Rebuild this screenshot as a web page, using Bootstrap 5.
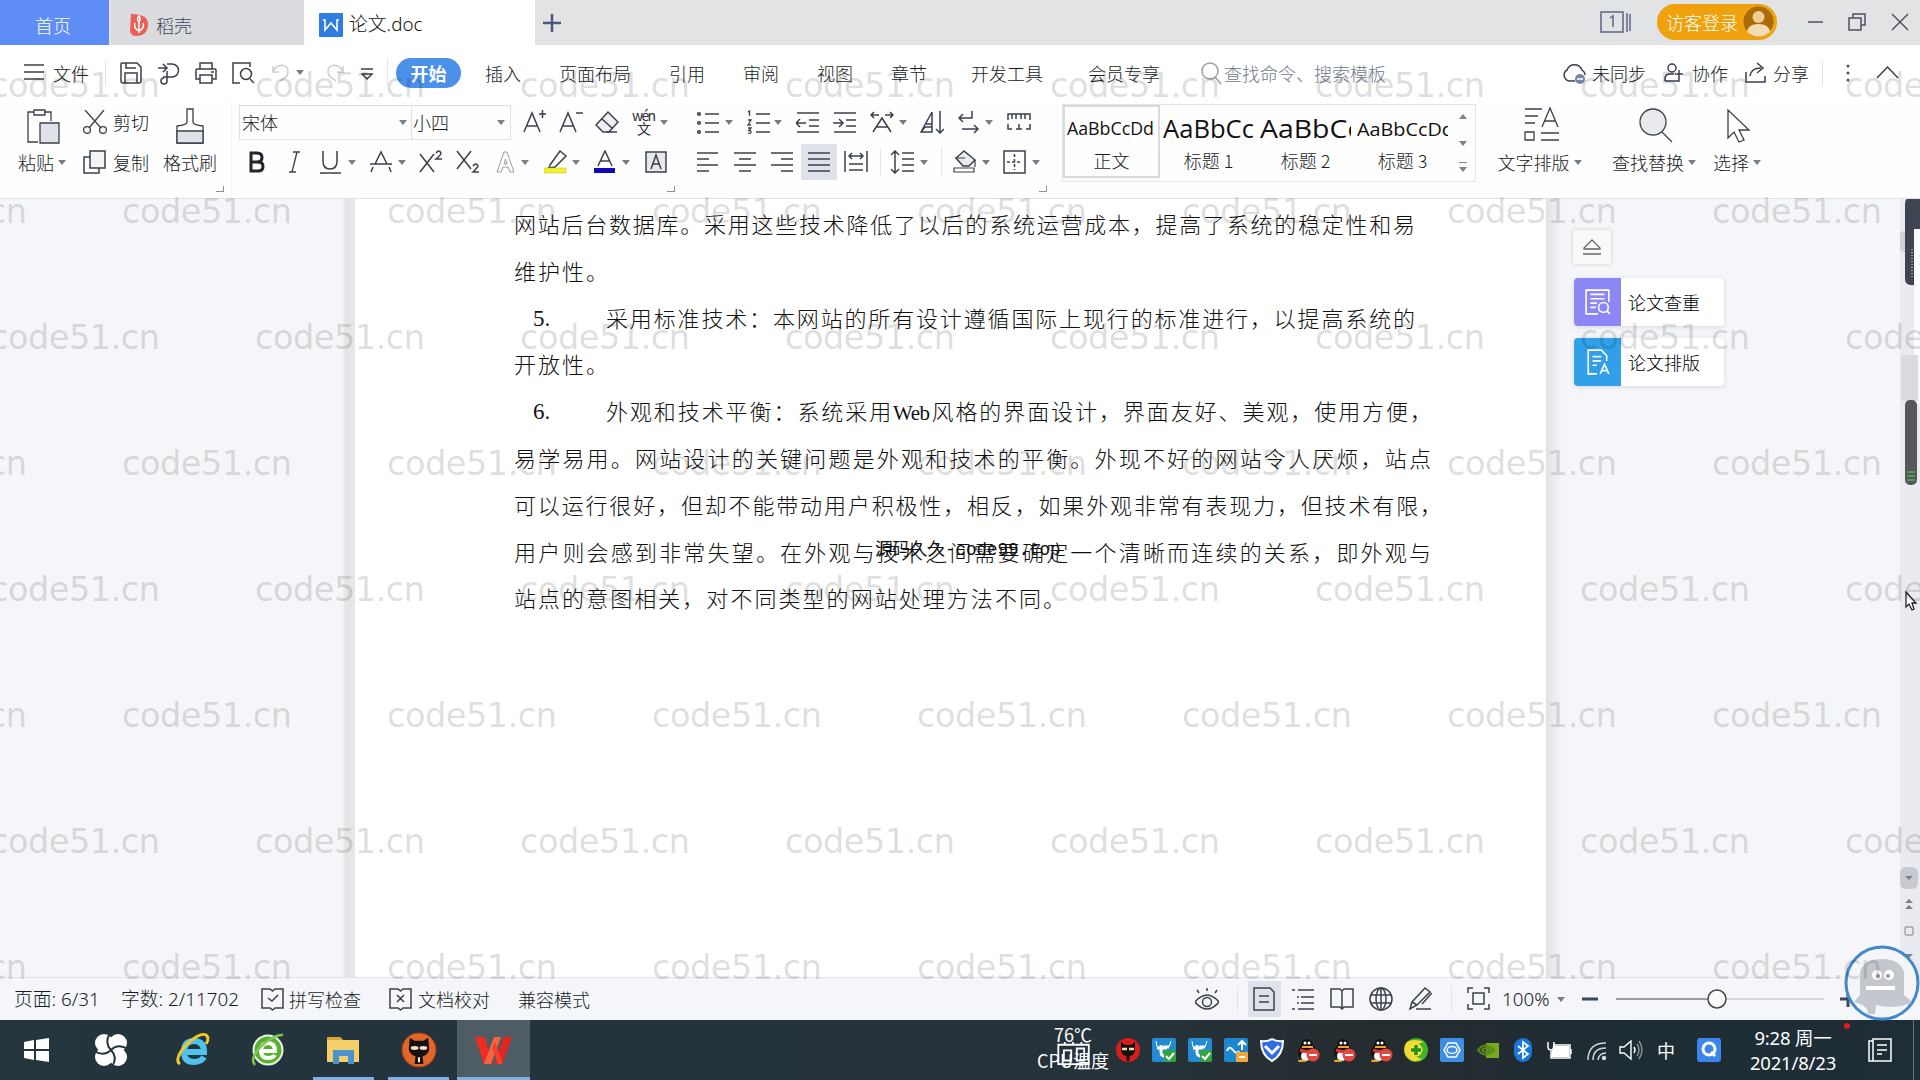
<!DOCTYPE html>
<html lang="zh-CN">
<head>
<meta charset="utf-8">
<title>论文.doc</title>
<link href="https://cdn.jsdelivr.net/npm/bootstrap@5.3.0/dist/css/bootstrap.min.css" rel="stylesheet">
<script src="https://cdn.jsdelivr.net/npm/bootstrap@5.3.0/dist/js/bootstrap.bundle.min.js"></script>
<style>
body{width:1920px;height:1080px;overflow:hidden;position:relative;font:300 18px/1 "Noto Sans CJK SC",sans-serif;color:#171b24;background:#fff}
.strip{display:grid;align-items:center;white-space:nowrap;justify-items:start}
svg{display:block;overflow:visible;flex:none}
.ic{width:24px;height:24px;fill:none;stroke:#3b404b;stroke-width:1.5}
.ic.big{width:36px;height:36px;stroke-width:1.3}
.caret{width:0;height:0;border:4px solid transparent;border-top:5px solid #777c85;border-bottom:0}
.vline{width:1px;height:26px;background:#e3e4e8}
.tabs{height:45px;background:#e1e3e5}
.tab-home{width:109px;background:#5e8df6;color:#fff;padding-right:3px}
.tab-docer{width:193px;margin-left:2px;background:#dadbde;color:#3d4557;padding-left:19px;gap:8px}
.tab-doc{width:231px;background:#fff;padding-left:15px;gap:6px;color:#111}
.winbar{grid-template-columns:45px 12px 132px 19px 40px 44px 28px;margin-left:auto;padding-bottom:2px}
.login{width:120px;height:36px;border-radius:18px;background:#efa20d;color:#fff;padding:0 3px 0 9px}
.menu{height:57px;padding-left:24px;padding-bottom:2px;grid-template-columns:29px 52px 15px 38px 37px 37px 40px 24px 24px 41px 26px 9px 89px 74px 110px 74px 74px 74px 80px 117px 113px 23px 338px 30px 72px 28px 53px 28px 49px 23px 32px 43px}
.start{width:65px;height:30px;border-radius:15px;background:#4b90e9;color:#fff;font-weight:700}
.ribbon{height:97px;background:#fefefe;border-bottom:1px solid #e2e3e6;position:relative}
.cellA{height:40px}
.cellA>span,.cellA.lab{position:relative}
.g1{width:232px;padding-left:7px;border-right:1px solid #f4f4f6}
.g2{width:458px;padding-left:7px}
.g3{width:372px;padding-left:7px}
.g2a{grid-template-columns:284px 36px 36px 37px 28px 20px}
.g2b{padding-left:8px;grid-template-columns:42px 31px 28px 22px 28px 21px 37px 40px 25px 23px 28px 22px 28px 23px 30px}
.g3a{grid-template-columns:28px 22px 27px 22px 37px 37px 29px 21px 38px 27px 22px 30px}
.g3b{grid-template-columns:37px 37px 30px 43px 36px 11px 29px 21px 12px 29px 21px 29px 10px}
.fontbox{width:272px;height:35px;border:1px solid #e0e1e4}
.fontname{width:172px;height:33px;border-right:1px solid #e0e1e4;padding:0 4px 0 2px}
.fontsz{flex:1;padding:0 5px 0 1px}
.on{width:36px;height:36px;background:#dfe2e9}
.styles{width:414px;height:78px;margin-top:2px;border:1px solid #e3e4e7}
.sty{width:97px;height:74px;padding-top:5px}
.sty.sel{border:2px solid #d9dadd;height:73px;padding-top:3px}
.sty svg{width:91px;height:41px;overflow:hidden}
.sty text{font-family:"Open Sans",sans-serif;font-weight:400;fill:#111}
.corner{position:absolute;top:84px;width:8px;height:6px;border:solid #8b8f97;border-width:0 1px 1px 0}
.work{height:778px;background:#f5f6f9}
.gut{width:355px;background:linear-gradient(90deg,#f5f6f9 342px,#e3e4e6 346px,#e6e7e9 354px)}
.paper{width:1191px;background:#fff;padding:1px 0 0 159px;font-size:22px;line-height:46.8px;color:#111}
.ln{display:flex;white-space:nowrap;height:46.8px}
.ln>div{text-align:justify;text-align-last:justify}
.w1{width:901px}.w2{width:94px}.w3{width:809px}.w5{width:826px}.w6{width:917px}.w7{width:928px}.w9{width:551px}
.no{width:92px;padding-left:19px;font:400 23px/50px "Liberation Serif",serif}
.webword{font-family:"Liberation Serif",serif;font-weight:400;font-size:21px;letter-spacing:-.5px}
.side{flex:1;padding:31px 0 0 27px;background:linear-gradient(90deg,#dfe0e2 0,#e9eaec 6px,#f5f6f9 16px)}
.fold{width:38px;height:34px;background:#f9f9fb;border-radius:3px;box-shadow:0 0 4px #ccc}
.tool{width:150px;height:48px;background:#fff;border-radius:4px;box-shadow:0 1px 5px #d5d6da;overflow:hidden;margin-left:1px;color:#000}
.tool>span:first-child{width:47px;height:48px;background:#8c86f6;margin-right:7px}
.tool.blue>span:first-child{background:#31a0e8}
.tool .ic{stroke:#fff;width:26px;height:26px}
.scroll{width:20px;background:#e9ebf1}
.scroll svg{width:20px;height:778px}
.status{height:43px;background:#f4f6fa;border-top:1px solid #e2e4e8;padding-left:14px;grid-template-columns:107px 140px 28px 100px 29px 100px 677px 42px 11px 44px 38px 39px 39px 43px 16px 35px 55px 25px 34px 224px 20px}
.status .act{width:33px;height:36px;background:#dfe2ea}
.slider{width:208px;height:20px}
.task{height:60px;background:linear-gradient(90deg,#24353e,#263239 60%,#252c2f 72%,#1e2c34 85%,#1f2d36)}
.apps{grid-template-columns:70px 81px 76px 75px 75px 69px 73px;padding-left:24px}
.apps>*{height:60px;display:flex;align-items:center}
.runbar{box-shadow:inset 0 -3px #83b0e4}
.tray{margin-left:auto;width:883px;height:60px;grid-template-columns:79px 36px 36px 36px 36px 37px 36px 37px 34px 36px 37px 35px 35px 40px 32px 38px 40px 49px 122px 45px 1px}
.tray svg{width:24px;height:24px}
.cpu{position:relative;width:72px;color:#fff;text-align:center;line-height:26px;font-weight:400}
.cpu div{position:relative;top:-3px}
.cpu svg{position:absolute;left:19px;top:18px;width:36px;height:24px}
.clock{width:94px;color:#fff;text-align:center;line-height:25px;font-family:"Noto Sans","Noto Sans CJK SC",sans-serif;font-weight:400;font-size:18.5px;letter-spacing:-.2px}
.marks{position:absolute;left:0;top:0;width:1920px;height:1080px;pointer-events:none}
.marks text{font-family:"DejaVu Sans",sans-serif;font-weight:400;font-size:33.5px;fill:#000;fill-opacity:.15}
.credit{position:absolute;left:875px;top:540px;width:190px;font:400 17.5px/20px "Liberation Mono","Noto Sans CJK SC",monospace;color:#111;white-space:nowrap}
.num{font-family:"Noto Sans","Noto Sans CJK SC",sans-serif;font-size:18.8px;font-weight:300}
</style>
</head>
<body class="d-flex flex-column">
<svg width="0" height="0" class="position-absolute">
<symbol id="ham" viewBox="0 0 24 24"><path d="M0 4H20M0 11H20M0 18H20"/></symbol>
<symbol id="save" viewBox="0 0 24 24"><path d="M1 3Q1 2 2 2H17L21 6V20Q21 22 19 22H3Q1 22 1 20ZM5 22V12H17V22M6 2V7H16"/></symbol>
<symbol id="export" viewBox="0 0 24 24"><path d="M0 7H8M5 3L9 7L5 11M9 3H14A6 6 0 0 1 14 16H5M9 10V20A3 3 0 1 1 6 17"/></symbol>
<symbol id="print" viewBox="0 0 24 24"><path d="M5 8V2H17V8M5 18H1V9Q1 8 2 8H20Q21 8 21 9V18H17M5 14H17V22H5ZM16 11H19"/></symbol>
<symbol id="preview" viewBox="0 0 24 24"><path d="M8 22H1V2H18V6M18 18L22 22"/><circle cx="14" cy="13" r="5.5"/></symbol>
<symbol id="undo" viewBox="0 0 24 24"><path d="M1 5V11H7M1 11C5 1 17 3 16 11Q16 16 8 20"/></symbol>
<symbol id="more" viewBox="0 0 24 24"><path d="M0 8H12M1 13H11L6 18Z"/></symbol>
<symbol id="find" viewBox="0 0 24 24"><circle cx="9" cy="10" r="8"/><path d="M14 16L20 23"/></symbol>
<symbol id="cloud" viewBox="0 0 24 24"><path d="M13 20H7A6 6 0 0 1 5 9A8 8 0 0 1 20 9Q23 11 23 14"/><circle cx="18" cy="18" r="5" fill="#7684a6" stroke="none"/><path d="M15 18H21" stroke="#fff"/></symbol>
<symbol id="person" viewBox="0 0 24 24"><circle cx="8" cy="7" r="4"/><path d="M1 20V18Q1 13 6 13H10M1 20H15V17M15 9V17M11 13H19"/></symbol>
<symbol id="share" viewBox="0 0 24 24"><path d="M1 11V21H20V15M5 15Q6 7 16 7M12 2L18 7L12 12"/></symbol>
<symbol id="paste" viewBox="0 0 36 36"><path d="M12 34H2V4H8M18 4H25V13M8 2H19V7H8Z"/><path d="M14 15H33V35H14Z" fill="#dfe2e8"/></symbol>
<symbol id="cut" viewBox="0 0 24 24"><path d="M2 0L18 18M21 0L6 18"/><circle cx="4" cy="20" r="3.4"/><circle cx="20" cy="20" r="3.4"/></symbol>
<symbol id="copy" viewBox="0 0 24 24"><path d="M7 7H1V23H16V18"/><path d="M7 1H22V18H7Z" fill="#f3f4f6"/></symbol>
<symbol id="brush" viewBox="0 0 36 36"><path d="M15 14V1H21V14Q21 17 31 18V35H5V18Q15 17 15 14Z"/><path d="M5 23H31V35H5Z" fill="#dfe2e8"/></symbol>
<symbol id="aplus" viewBox="0 0 24 24"><path d="M1 22L9 3L17 22M4 16H14M16 4H23M19.500 0V8"/></symbol>
<symbol id="aminus" viewBox="0 0 24 24"><path d="M1 22L9 3L17 22M4 16H14M17 3H24"/></symbol>
<symbol id="eraser" viewBox="0 0 24 24"><path d="M1 15L13 2L23 12L14 22H8Z" fill="#eceef1"/><path d="M7 9L17 18M12 22H22"/></symbol>
<symbol id="strike" viewBox="0 0 24 24"><path d="M0 14H22M5 14L11 2L17 14M3 17L1 22M19 17L21 22"/></symbol>
<symbol id="aout" viewBox="0 0 24 24"><path d="M1 22L8 2H11L18 22H14L12 17H7L5 22ZM8 14H11L9.500 9Z" stroke="#9a9da3" stroke-width="1"/></symbol>
<symbol id="marker" viewBox="0 0 24 24"><path d="M6 15L16 1L22 6L11 17L5 18ZM5 18L2 19"/><path d="M0 18H22V23H0Z" fill="#f3f32c" stroke="#b9b92c" stroke-width=".5"/></symbol>
<symbol id="acolor" viewBox="0 0 24 24"><path d="M4 16L11 1L18 16M6 11H16"/><path d="M0 18H21V23H0Z" fill="#1109b8" stroke="none"/></symbol>
<symbol id="abox" viewBox="0 0 24 24"><path d="M1 2H21V22H1Z" fill="#e6e8ec"/><path d="M6 19L11 5L16 19M8 14H14"/></symbol>
<symbol id="bul" viewBox="0 0 24 24"><circle cx="2" cy="4" r="1.300"/><circle cx="2" cy="13" r="1.300"/><circle cx="2" cy="22" r="1.300"/><path d="M8 4H22M8 13H22M8 22H22"/></symbol>
<symbol id="numl" viewBox="0 0 24 24"><path d="M1 2L2.500 1V6M1 10H4L1 15H4M1 18H4L2 20.500Q4 20 4 22T1 23" stroke-width="1.300"/><path d="M9 4H23M9 13H23M9 22H23"/></symbol>
<symbol id="outd" viewBox="0 0 24 24"><path d="M1 3H23M13 10H23M13 16H23M1 22H23M0 13H10M4 9L0 13L4 17"/></symbol>
<symbol id="ind" viewBox="0 0 24 24"><path d="M1 3H23M13 10H23M13 16H23M1 22H23M0 13H10M6 9L10 13L6 17"/></symbol>
<symbol id="awide" viewBox="0 0 24 24"><path d="M3 22L12 8L21 22M6 17H18M1 5H9M4 2L1 5L4 8M15 5H23M20 2L23 5L20 8"/></symbol>
<symbol id="sort" viewBox="0 0 24 24"><path d="M1 22L12 2V22ZM6 14H12M1 22L5 17H12M20 1V23M16 19L20 23L24 19"/></symbol>
<symbol id="wrap" viewBox="0 0 24 24"><path d="M14 1V8H1M5 4L1 8L5 12M4 19H20M16 15L20 19L16 23"/></symbol>
<symbol id="ruler" viewBox="0 0 24 24"><path d="M1 10V4H23V10M5 4V9M9 4V9M14 4V9M18 4V9M1 14V19H5M23 14V19H19M9 19H15M12 14V19"/></symbol>
<symbol id="al" viewBox="0 0 24 24"><path d="M0 3H21M0 9H12M0 15H21M0 21H12"/></symbol>
<symbol id="ac" viewBox="0 0 24 24"><path d="M0 3H22M5 9H17M0 15H22M5 21H17"/></symbol>
<symbol id="ar" viewBox="0 0 24 24"><path d="M0 3H22M10 9H22M0 15H22M10 21H22"/></symbol>
<symbol id="aj" viewBox="0 0 24 24"><path d="M1 3H23M1 9H23M1 15H23M1 21H23"/></symbol>
<symbol id="dist" viewBox="0 0 24 24"><path d="M1 1V22M23 1V22M5 14H19M5 20H19M5 6H19M8 3L5 6L8 9M16 3L19 6L16 9"/></symbol>
<symbol id="lsp" viewBox="0 0 24 24"><path d="M4 2V22M0 5L4 1L8 5M0 19L4 23L8 19M11 3H23M11 9H23M11 15H23M11 21H23"/></symbol>
<symbol id="bucket" viewBox="0 0 24 24"><path d="M11 1L3 8L10 16H16L22 10Z" fill="#e9ebee"/><path d="M2 8H12M22 10V17M1 18H21V22H1Z" stroke-width="1.200"/></symbol>
<symbol id="grid" viewBox="0 0 24 24"><path d="M1 1H22V23H1Z"/><path d="M11.500 4V20M4 12H19" stroke-dasharray="3 2"/></symbol>
<symbol id="typeset" viewBox="0 0 36 36"><path d="M1 3H18M1 10H14M1 17H11M18 21L26 2L34 21M21 15H31M17 27H35M17 34H35M1 26H10V34H1Z"/></symbol>
<symbol id="bigfind" viewBox="0 0 36 36"><circle cx="15" cy="14" r="13" fill="#e8eaee"/><path d="M24 24L34 34"/></symbol>
<symbol id="arrow" viewBox="0 0 36 36"><path d="M7 2V30L13 24L18 34L23 32L18 22H28Z"/></symbol>
<symbol id="spell" viewBox="0 0 24 24"><path d="M1 2H9L11.500 4L14 2H22V21H14L11.500 23L9 21H1ZM7 11L11 14L17 8"/></symbol>
<symbol id="proof" viewBox="0 0 24 24"><path d="M1 2H9L11.500 4L14 2H22V21H14L11.500 23L9 21H1ZM8 8L15 15M15 8L8 15"/></symbol>
<symbol id="eye" viewBox="0 0 24 24"><path d="M0 15Q12 1 24 15Q12 29 0 15ZM12 1V4M2 3L4 6M22 3L20 6"/><circle cx="12" cy="15" r="4.500"/></symbol>
<symbol id="pg" viewBox="0 0 24 24"><path d="M1 1H17L21 5V23H1ZM6 9H16M6 15H16"/></symbol>
<symbol id="lst" viewBox="0 0 24 24"><path d="M0 3H3M6 3H22M5 10H7M9 10H22M5 16H7M9 16H22M0 22H3M6 22H22"/></symbol>
<symbol id="book" viewBox="0 0 24 24"><path d="M1 2H10L12 4L14 2H23V20H14L12 22L10 20H1ZM12 4V22"/></symbol>
<symbol id="globe" viewBox="0 0 24 24"><circle cx="12" cy="12" r="11"/><ellipse cx="12" cy="12" rx="5" ry="11"/><path d="M2 8H22M2 16H22M12 1V23"/></symbol>
<symbol id="pen" viewBox="0 0 24 24"><path d="M2 22L4 15L17 1L22 5L9 18ZM4 15L9 18M14 17L24 6M8 22H23"/></symbol>
<symbol id="fit" viewBox="0 0 24 24"><path d="M1 6V1H6M17 1H22V6M22 17V22H17M6 22H1V17M6 6H17V17H6Z"/></symbol>
<symbol id="tcloud" viewBox="0 0 24 24"><rect width="24" height="24" rx="2" fill="#238bd2"/><path d="M5 10H13V9H17M9 7V14Q9 19 15 18" stroke="#fff" stroke-width="3" fill="none"/><path d="M5 9L4 3M17 9L19 3" stroke="#fff"/><rect x="12" y="12" width="12" height="12" rx="2" fill="#31a440"/><path d="M14 18L17 21L22 15" stroke="#fff" stroke-width="2" fill="none"/></symbol>
<symbol id="qq" viewBox="0 0 24 24"><ellipse cx="10" cy="14" rx="9" ry="8" fill="#111"/><ellipse cx="10" cy="8" rx="6" ry="7" fill="#111"/><ellipse cx="9" cy="18" rx="5" ry="5" fill="#fff"/><circle cx="8" cy="5" r="1.500" fill="#fff"/><circle cx="12" cy="5" r="1.500" fill="#fff"/><path d="M5 9H16" stroke="#f3a52c" stroke-width="2"/><path d="M3 12Q10 15 17 12" stroke="#d33" stroke-width="3" fill="none"/><ellipse cx="5" cy="23" rx="4" ry="1.500" fill="#eaa22a"/><circle cx="16" cy="17" r="6.500" fill="#e04840"/><path d="M12 17H20" stroke="#fff" stroke-width="2"/></symbol>
</svg>

<header class="tabs d-flex align-items-stretch">
<div class="tab-home d-flex align-items-center justify-content-center pt-1">首页</div>
<div class="tab-docer d-flex align-items-center pt-1"><svg width="18" height="22" viewBox="0 0 18 22"><path d="M1 0Q18 0 18 10Q18 22 6 22Q1 22 0 17Z" fill="#ec5f55"/><path d="M9 19V8Q11 5 9 2Q6 5 9 8M9 17Q3 14 5 9M9 17Q15 14 13 9" stroke="#fff" stroke-width="1.500" fill="none"/></svg><span>稻壳</span></div>
<div class="tab-doc d-flex align-items-center pt-1"><svg width="24" height="24" viewBox="0 0 24 24"><rect width="24" height="24" rx="1" fill="#2f7de0"/><path d="M4 7H6V17L12 10L18 17V7H20" stroke="#fff" stroke-width="1.600" fill="none"/></svg><span class="num">论文.doc</span></div>
<svg class="align-self-center ms-2" width="18" height="18" viewBox="0 0 18 18"><path d="M9 0V18M0 9H18" stroke="#4d5878" stroke-width="2.500"/></svg>
<div class="strip winbar">
<svg width="32" height="22" viewBox="0 0 32 22"><path d="M1 1H23V21H1ZM27 2V21M30 3V20" fill="none" stroke="#5c6684" stroke-width="1.500"/><path d="M10 7L13 5V16" stroke="#5c6684" stroke-width="1.500" fill="none"/></svg>
<i class="vline"></i>
<div class="login d-flex align-items-center justify-content-between"><span>访客登录</span><svg width="31" height="31" viewBox="0 0 31 31"><circle cx="15.500" cy="15.500" r="15" fill="#ab6c08"/><circle cx="15.500" cy="11" r="6" fill="#efce91"/><path d="M4 26Q5 18 15.500 18T27 26Q16 35 4 26" fill="#f3dcb4"/></svg></div>
<i class="vline"></i>
<svg width="15" height="18"><path d="M0 9H15" stroke="#4d5260" stroke-width="1.500"/></svg>
<svg width="18" height="18" viewBox="0 0 18 18"><path d="M5 5V1H17V12H13M1 5H13V17H1Z" fill="none" stroke="#4d5260" stroke-width="1.500"/></svg>
<svg width="16" height="16"><path d="M0 0L16 16M16 0L0 16" stroke="#4d5260" stroke-width="1.500"/></svg>
</div>
</header>

<nav class="strip menu">
<svg class="ic"><use href="#ham"/></svg><span>文件</span><i class="vline"></i>
<svg class="ic"><use href="#save"/></svg><svg class="ic"><use href="#export"/></svg><svg class="ic"><use href="#print"/></svg><svg class="ic"><use href="#preview"/></svg>
<svg class="ic opacity-25"><use href="#undo"/></svg><i class="caret"></i><svg class="ic opacity-25" style="transform:scaleX(-1)"><use href="#undo"/></svg><svg class="ic"><use href="#more"/></svg><i class="vline"></i>
<span class="start d-flex align-items-center justify-content-center">开始</span>
<span>插入</span><span>页面布局</span><span>引用</span><span>审阅</span><span>视图</span><span>章节</span><span>开发工具</span><span>会员专享</span>
<svg class="ic opacity-50"><use href="#find"/></svg><span style="color:#6f798d">查找命令、搜索模板</span>
<svg class="ic"><use href="#cloud"/></svg><span>未同步</span><svg class="ic"><use href="#person"/></svg><span>协作</span><svg class="ic"><use href="#share"/></svg><span>分享</span><i class="vline"></i>
<svg width="6" height="20" fill="#4d5260"><circle cx="3" cy="3" r="1.500"/><circle cx="3" cy="10" r="1.500"/><circle cx="3" cy="17" r="1.500"/></svg>
<svg class="ic"><path d="M0 17L10.500 6L21 17"/></svg>
</nav>

<section class="ribbon d-flex">
<div class="g1 d-flex">
<div class="d-flex flex-column align-items-center" style="width:76px;padding-right:6px"><div class="cellA d-flex align-items-center pt-2 ps-1"><svg class="ic big"><use href="#paste"/></svg></div><div class="cellA d-flex align-items-center gap-1"><span>粘贴</span><i class="caret"></i></div></div>
<div style="width:79px"><div class="cellA d-flex align-items-center" style="gap:6px"><svg class="ic" style="stroke-width:1.3"><use href="#cut"/></svg><span>剪切</span></div><div class="cellA d-flex align-items-center" style="gap:6px"><svg class="ic"><use href="#copy"/></svg><span>复制</span></div></div>
<div class="d-flex flex-column align-items-center" style="width:56px"><div class="cellA d-flex align-items-center pt-2"><svg class="ic big"><use href="#brush"/></svg></div><div class="cellA d-flex align-items-center">格式刷</div></div>
</div>
<div class="g2">
<div class="strip g2a cellA">
<div class="fontbox d-flex align-items-center"><div class="fontname d-flex align-items-center justify-content-between"><span>宋体</span><i class="caret"></i></div><div class="fontsz d-flex align-items-center justify-content-between"><span>小四</span><i class="caret"></i></div></div>
<svg class="ic"><use href="#aplus"/></svg><svg class="ic"><use href="#aminus"/></svg><svg class="ic"><use href="#eraser"/></svg>
<svg width="26" height="26" fill="#2b2f38"><text x="0" y="12" font-size="14" font-weight="400" textLength="24">wén</text><text x="5" y="25" font-size="14" font-weight="400">文</text></svg><i class="caret"></i>
</div>
<div class="strip g2b cellA">
<svg width="20" height="24" fill="none" stroke="#20242d" stroke-width="3"><path d="M4 3H10Q15 3 15 7.500T10 12H4ZM4 12H11Q16 12 16 16.500T11 21H4Z"/></svg>
<svg class="ic" style="stroke-width:1.3"><path d="M4 2H11M0 22H7M8 2L3 22"/></svg>
<svg class="ic"><path d="M3 1V11Q3 19 10 19T17 11V1M0 23H21"/></svg><i class="caret"></i>
<svg class="ic"><use href="#strike"/></svg><i class="caret"></i>
<svg class="ic"><path d="M1 4L15 22M15 4L1 22M17 3Q20 -1 22 3Q22 5 17 9H23"/></svg>
<svg class="ic"><path d="M1 1L15 19M15 1L1 19M17 16Q20 12 22 16Q22 17 17 22H23"/></svg>
<svg class="ic"><use href="#aout"/></svg><i class="caret"></i><svg class="ic"><use href="#marker"/></svg><i class="caret"></i><svg class="ic"><use href="#acolor"/></svg><i class="caret"></i><svg class="ic"><use href="#abox"/></svg>
</div>
</div>
<div class="g3">
<div class="strip g3a cellA">
<svg class="ic"><use href="#bul"/></svg><i class="caret"></i><svg class="ic"><use href="#numl"/></svg><i class="caret"></i><svg class="ic"><use href="#outd"/></svg><svg class="ic"><use href="#ind"/></svg><svg class="ic"><use href="#awide"/></svg><i class="caret"></i><svg class="ic"><use href="#sort"/></svg><svg class="ic"><use href="#wrap"/></svg><i class="caret"></i><svg class="ic"><use href="#ruler"/></svg>
</div>
<div class="strip g3b cellA">
<svg class="ic"><use href="#al"/></svg><svg class="ic"><use href="#ac"/></svg><svg class="ic"><use href="#ar"/></svg><span class="on d-flex align-items-center justify-content-center"><svg class="ic"><use href="#aj"/></svg></span><svg class="ic"><use href="#dist"/></svg><i class="vline"></i><svg class="ic"><use href="#lsp"/></svg><i class="caret"></i><i class="vline"></i><svg class="ic"><use href="#bucket"/></svg><i class="caret"></i><svg class="ic"><use href="#grid"/></svg><i class="caret"></i>
</div>
</div>
<div class="styles d-flex">
<div class="sty sel d-flex flex-column align-items-center"><svg><text x="1" y="25" font-size="17.500" textLength="87" lengthAdjust="spacingAndGlyphs">AaBbCcDd</text></svg><span>正文</span></div>
<div class="sty d-flex flex-column align-items-center"><svg><text x="0" y="28" font-size="25" textLength="91" lengthAdjust="spacingAndGlyphs">AaBbCc</text></svg><span>标题 1</span></div>
<div class="sty d-flex flex-column align-items-center"><svg><text x="0" y="28" font-size="25" textLength="101" lengthAdjust="spacingAndGlyphs">AaBbCc</text></svg><span>标题 2</span></div>
<div class="sty d-flex flex-column align-items-center"><svg><text x="0" y="26" font-size="19" textLength="97" lengthAdjust="spacingAndGlyphs">AaBbCcDd</text></svg><span>标题 3</span></div>
<svg width="22" height="76" fill="#7b8089"><path d="M8 14L12 9L16 14ZM8 36L12 41L16 36ZM8 62L12 67L16 62ZM8 57H16V58H8Z"/></svg>
</div>
<div class="d-flex flex-column align-items-center" style="width:127px"><div class="cellA d-flex align-items-center pt-1 ps-1"><svg class="ic big"><use href="#typeset"/></svg></div><div class="cellA d-flex align-items-center gap-1"><span>文字排版</span><i class="caret"></i></div></div>
<div class="d-flex flex-column align-items-center" style="width:102px"><div class="cellA d-flex align-items-center pt-2 ps-1"><svg class="ic big"><use href="#bigfind"/></svg></div><div class="cellA d-flex align-items-center gap-1"><span>查找替换</span><i class="caret"></i></div></div>
<div class="d-flex flex-column align-items-center" style="width:64px"><div class="cellA d-flex align-items-center pt-2 ps-1"><svg class="ic big"><use href="#arrow"/></svg></div><div class="cellA d-flex align-items-center gap-1"><span>选择</span><i class="caret"></i></div></div>
<i class="corner" style="left:216px"></i><i class="corner" style="left:667px"></i><i class="corner" style="left:1039px"></i>
</section>

<main class="work d-flex">
<div class="gut"></div>
<article class="paper">
<div class="ln"><div class="w1">网站后台数据库。采用这些技术降低了以后的系统运营成本，提高了系统的稳定性和易</div></div>
<div class="ln"><div class="w2">维护性。</div></div>
<div class="ln"><span class="no">5.</span><div class="w3">采用标准技术：本网站的所有设计遵循国际上现行的标准进行，以提高系统的</div></div>
<div class="ln"><div class="w2">开放性。</div></div>
<div class="ln"><span class="no">6.</span><div class="w5">外观和技术平衡：系统采用<span class="webword">Web</span>风格的界面设计，界面友好、美观，使用方便，</div></div>
<div class="ln"><div class="w6">易学易用。网站设计的关键问题是外观和技术的平衡。外现不好的网站令人厌烦，站点</div></div>
<div class="ln"><div class="w7">可以运行很好，但却不能带动用户积极性，相反，如果外观非常有表现力，但技术有限，</div></div>
<div class="ln"><div class="w6">用户则会感到非常失望。在外观与技术之间需要确定一个清晰而连续的关系，即外观与</div></div>
<div class="ln"><div class="w9">站点的意图相关，对不同类型的网站处理方法不同。</div></div>
</article>
<aside class="side">
<div class="fold d-flex align-items-center justify-content-center mb-3"><svg width="18" height="18" fill="none" stroke="#666" stroke-width="1.300"><path d="M1 10L9 2L17 10V11H1ZM0 16H18"/></svg></div>
<div class="tool d-flex align-items-center" style="margin-bottom:12px;margin-top:-2px"><span class="d-flex align-items-center justify-content-center"><svg class="ic" viewBox="0 0 24 24"><path d="M12 23H1V1H22V12M5 5H18M5 9H18M5 13H11M5 17H10M20 20L23 23"/><circle cx="17" cy="17" r="4.500"/></svg></span><span>论文查重</span></div>
<div class="tool blue d-flex align-items-center"><span class="d-flex align-items-center justify-content-center"><svg class="ic" viewBox="0 0 24 24"><path d="M11 23H3V1H15L20 6V11M7 7H15M7 11H15M7 15H11M14 23L18 14L22 23M15 20H21"/></svg></span><span>论文排版</span></div>
</aside>
<div class="scroll"><svg viewBox="0 0 20 778"><path d="M0 35Q0 32 5 32V53Q0 53 0 50Z" fill="#cfd2d9"/><path d="M5 5Q5 -2 12 -2H20V30H14V86Q5 87 5 80Z" fill="#3f4452"/><path d="M14 30H20V205H14Z" fill="#fbfcff"/><path d="M12 50V78" stroke="#9aa487" stroke-width="2" stroke-dasharray="1 2"/><rect x="1" y="156" width="17" height="46" fill="#d9dbe0"/><rect x="5" y="201" width="12" height="85" rx="5" fill="#55575b"/><path d="M7 273H15M7 277H15M7 281H15" stroke="#48b552" stroke-width="1.500"/><rect x="0" y="668" width="18" height="22" rx="6" fill="#c8cad1"/><path d="M5 677H13L9 681ZM5 704L9 700L13 704ZM5 710L9 706L13 710ZM5 755H13L9 759Z" fill="#7b808c"/><rect x="5" y="728" width="8" height="8" rx="1" fill="none" stroke="#7b808c"/></svg></div>
</main>

<footer class="strip status">
<span class="num">页面: 6/31</span><span class="num">字数: 2/11702</span><svg class="ic"><use href="#spell"/></svg><span>拼写检查</span><svg class="ic"><use href="#proof"/></svg><span>文档校对</span><span>兼容模式</span>
<svg class="ic"><use href="#eye"/></svg><i class="vline"></i><span class="act d-flex align-items-center justify-content-center"><svg class="ic"><use href="#pg"/></svg></span><svg class="ic"><use href="#lst"/></svg><svg class="ic"><use href="#book"/></svg><svg class="ic"><use href="#globe"/></svg><svg class="ic"><use href="#pen"/></svg><i class="vline"></i><svg class="ic"><use href="#fit"/></svg><span class="num">100%</span><i class="caret"></i>
<svg width="16" height="4"><path d="M0 2H16" stroke="#40465a" stroke-width="3"/></svg>
<svg class="slider"><path d="M0 10H92" stroke="#444"/><path d="M110 10H208" stroke="#bbb"/><circle cx="101" cy="10" r="9" fill="#fafafa" stroke="#444" stroke-width="1.500"/></svg>
<svg width="16" height="16"><path d="M0 8H16M8 0V16" stroke="#40465a" stroke-width="3"/></svg>
</footer>

<footer class="task d-flex">
<div class="strip apps">
<div><svg width="25" height="24" viewBox="0 0 25 24" fill="#fff"><path d="M0 4L10 2V11H0ZM12 2L25 0V11H12ZM0 13H10V22L0 20ZM12 13H25V24L12 22Z"/></svg></div>
<div><svg width="34" height="34" viewBox="0 0 34 34"><g fill="#fff"><circle cx="10" cy="10" r="9"/><circle cx="24" cy="10" r="9"/><circle cx="10" cy="24" r="9"/><circle cx="24" cy="24" r="9"/><path d="M10 8H24V26H10Z"/></g><path d="M17 17Q10 10 16 0M17 17Q24 10 34 16M17 17Q24 24 18 34M17 17Q10 24 0 18" fill="none" stroke="#24353e" stroke-width="2"/></svg></div>
<div><svg width="36" height="34" viewBox="0 0 36 34" fill="none"><path d="M9 19H29Q29 8 19 8T9 19Q9 29 19 29Q26 29 29 24" stroke="#4fc3ee" stroke-width="6"/><path d="M5 31C-5 25 22 -3 31 2Q35 5 31 11" stroke="#f0c52e" stroke-width="3"/></svg></div>
<div><svg width="34" height="34" viewBox="0 0 34 34" fill="none"><circle cx="17" cy="17" r="14.500" fill="#59b02f" stroke="#e9f7e4" stroke-width="2"/><path d="M10 18H24Q24 10 17 10T10 18Q10 25 17 25Q22 25 24 22" stroke="#fff" stroke-width="4"/><path d="M4 32Q-3 24 15 9Q26 1 32 2" stroke="#7bc94f" stroke-width="2.500"/></svg></div>
<div class="runbar justify-content-center" style="width:61px;margin-left:-13px"><svg width="33" height="28" viewBox="0 0 33 28"><path d="M0 1H13L16 4H32V26H0Z" fill="#f5cf67"/><path d="M0 1H13L16 4H0Z" fill="#dca338"/><path d="M6 28V14H27V28H21V20H12V28Z" fill="#4a92d0"/></svg></div>
<div class="runbar justify-content-center" style="width:61px;margin-left:-13px"><svg width="36" height="36" viewBox="0 0 37 37"><circle cx="18.500" cy="18.500" r="17.500" fill="#e0662a" stroke="#a53f13"/><path d="M9 6L14 9H23L28 6L29 18Q28 25 18.500 25T8 18Z" fill="#15100f"/><path d="M15 24H22L23 33H14Z" fill="#15100f"/><ellipse cx="14" cy="16.500" rx="4" ry="2" fill="#f6e0c3"/><ellipse cx="23" cy="16.500" rx="4" ry="2" fill="#f6e0c3"/><path d="M18.500 26V31" stroke="#fff" stroke-width="2"/></svg></div>
<div class="runbar justify-content-center" style="width:73px;margin-left:-13px;background:#4e5c64"><svg width="38" height="28" viewBox="0 0 38 28"><path d="M0 1H10L17 28H9Z" fill="#f02b22"/><path d="M9 28L19 1H26L16 28Z" fill="#f8643c"/><path d="M19 28L29 1H37L27 28Z" fill="#e5261f"/><path d="M17 12L23 28H28L20 6Z" fill="#f4402f"/></svg></div>
</div>
<div class="strip tray">
<div class="cpu"><div>76℃<br>CPU温度</div><svg viewBox="0 0 36 26" fill="none" stroke="#fff" stroke-width="2"><path d="M1 3H34V24H1ZM8 0V3M17 0V3M26 0V3M7 9H15V20H7ZM21 7V20H29V7ZM8 24V26M26 24V26"/></svg></div>
<svg viewBox="0 0 24 24"><circle cx="12" cy="12" r="12" fill="#d91c1c"/><path d="M5 4L9 7H15L19 4V13Q18 18 12 18T5 13Z" fill="#111"/><path d="M6 11H11M13 11H18" stroke="#f5d9b0" stroke-width="2.500"/><path d="M12 18V23" stroke="#111" stroke-width="3"/></svg>
<svg><use href="#tcloud"/></svg><svg><use href="#tcloud"/></svg>
<svg viewBox="0 0 24 24"><rect width="24" height="24" rx="2" fill="#1d86d1"/><path d="M3 13Q5 7 9 12T15 13M18 12V3M14 7L18 3L22 7" stroke="#fff" stroke-width="2" fill="none"/><rect x="12" y="14" width="12" height="10" rx="1" fill="#f3a63a"/><path d="M15 19H21" stroke="#fff" stroke-width="2"/></svg>
<svg viewBox="0 0 24 24"><path d="M1 3Q7 4 12 1Q17 4 23 3Q23 17 12 23Q1 17 1 3Z" fill="#2f6de0" stroke="#fff" stroke-width="2"/><path d="M5 8L12 15L19 8" stroke="#fff" stroke-width="3" fill="none"/></svg>
<svg><use href="#qq"/></svg><svg><use href="#qq"/></svg><svg><use href="#qq"/></svg>
<svg viewBox="0 0 24 24"><circle cx="12" cy="12" r="12" fill="#3fb42c"/><path d="M3 4Q10 0 20 4Q8 6 12 18Q16 22 20 20Q8 28 1 16Q-1 8 3 4" fill="#f6d92f"/><circle cx="12" cy="12" r="6.500" fill="#f6e33c"/><path d="M12 7V17M7 12H17" stroke="#2a8f23" stroke-width="3.500"/></svg>
<svg viewBox="0 0 24 24"><rect width="24" height="24" rx="2" fill="#3d8fe6"/><path d="M4 12L8 5H16L20 12L16 19H8Z" fill="none" stroke="#fff" stroke-width="1.500"/><ellipse cx="12" cy="12" rx="5" ry="3.500" fill="none" stroke="#fff" stroke-width="1.500"/></svg>
<svg viewBox="0 0 24 24"><path d="M9 5H22V20H9Z" fill="#76a820"/><path d="M1 12Q8 3 17 12Q8 21 1 12ZM5 12Q9 8 13 12Q9 16 5 12Z" fill="none" stroke="#5d8a17" stroke-width="2"/></svg>
<svg viewBox="0 0 24 24"><rect x="2" width="18" height="24" rx="9" fill="#1877d8"/><path d="M6 8L16 16L11 20V4L16 8L6 16" fill="none" stroke="#fff" stroke-width="1.700"/></svg>
<svg viewBox="0 0 24 24"><path d="M6 8H22V19H4" fill="#fff"/><path d="M6 7H23V20H4V13M1 4V9Q1 12 4 12T7 9V4M24 11V16" fill="none" stroke="#fff" stroke-width="1.500"/></svg>
<svg viewBox="0 0 24 24" fill="none" stroke="#cfd5d8" stroke-width="1.500"><path d="M1 22Q1 5 19 5M6 22Q6 10 19 10M11 22Q12 15 19 15"/><circle cx="17" cy="20" r="1.500" fill="#fff"/></svg>
<svg viewBox="0 0 24 24" fill="none" stroke="#fff" stroke-width="1.400"><path d="M1 9H5L12 3V21L5 15H1ZM15 9Q17 12 15 15"/><path d="M18 6Q22 12 18 18M20 3Q26 12 20 21" stroke="#8b9296"/></svg>
<span class="text-white" style="font-weight:400">中</span>
<svg viewBox="0 0 24 24"><rect width="24" height="24" rx="3" fill="#3b85ec"/><circle cx="12" cy="11" r="6" fill="none" stroke="#fff" stroke-width="3"/><path d="M14 14L18 18" stroke="#fff" stroke-width="3"/></svg>
<div class="clock">9:28 周一<br>2021/8/23</div>
<svg viewBox="0 0 24 24" fill="none" stroke="#fff" stroke-width="1.500"><path d="M5 1H23V23H5ZM5 3H1V23H5M9 7H19M9 12H19M9 16H14"/></svg>
<i style="width:1px;height:60px;background:#65727a"></i>
</div>
</footer>

<div class="credit">源码久久-code99.top</div>
<svg class="marks" id="marks"><g id="helper"><path d="M1906 592V607L1909 604L1912 610L1914 609L1912 603H1916Z" fill="#fff" stroke="#222" stroke-width="1.300"/><circle cx="1882" cy="983" r="36" fill="#f3f5f9" stroke="#4387cc" stroke-width="3"/><path d="M1860 995V972Q1864 959 1882 959T1904 972V995L1912 1002Q1898 1010 1876 1005L1875 1014H1868Q1869 1006 1854 1002Z" fill="#c4c7ce"/><circle cx="1877" cy="975" r="5" fill="#fff"/><circle cx="1889" cy="975" r="5" fill="#fff"/><circle cx="1878" cy="976" r="2" fill="#999"/><circle cx="1888" cy="976" r="2" fill="#999"/><path d="M1866 988H1895" stroke="#fff" stroke-width="4"/><circle cx="1847" cy="1026" r="3" fill="#e01d1d"/></g></svg>
<script>
// Staggered watermark rows
const layer=document.getElementById('marks');
for(let r=0;r<8;r++)for(let c=-1;c<8;c++){
  const t=document.createElementNS('http://www.w3.org/2000/svg','text');
  const x=(r%2?122:-10)+c*265;
  if(x>1920||x<-170)continue;
  t.setAttribute('x',x);t.setAttribute('y',97+r*126);t.setAttribute('textLength',170);
  t.textContent='code51.cn';layer.appendChild(t);
}
</script>
</body>
</html>
